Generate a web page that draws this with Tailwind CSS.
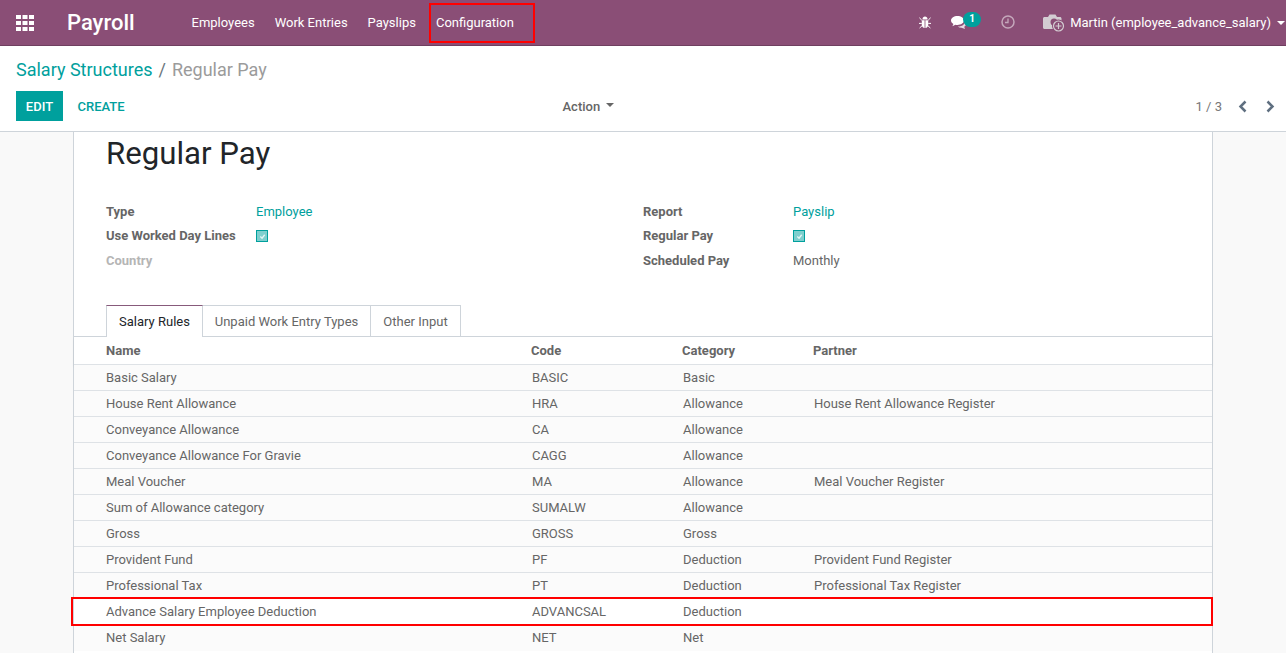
<!doctype html>
<html><head><meta charset="utf-8">
<script src="https://cdn.jsdelivr.net/npm/@tailwindcss/browser@4"></script>
</head>
<body class="m-0 h-[653px] w-[1286px] overflow-hidden bg-[#f9f9f9] font-['Roboto',sans-serif] text-[13px] text-[#666666]">
<header class="flex h-[46px] items-center border-b border-[#6f3f60] bg-[#8a4e76] text-white">
  <svg class="ml-[16px] h-[16px] w-[18px]" viewBox="0 0 18 16" fill="#fff"><rect x="0" y="0" width="5" height="4"/><rect x="6.500" y="0" width="5" height="4"/><rect x="13" y="0" width="5" height="4"/><rect x="0" y="6" width="5" height="4"/><rect x="6.500" y="6" width="5" height="4"/><rect x="13" y="6" width="5" height="4"/><rect x="0" y="12" width="5" height="4"/><rect x="6.500" y="12" width="5" height="4"/><rect x="13" y="12" width="5" height="4"/></svg>
  <div class="ml-[33px] w-[124.500px] text-[22px] font-medium leading-none">Payroll</div>
  <nav class="flex">
    <span class="mr-[20px]">Employees</span>
    <span class="mr-[20px]">Work Entries</span>
    <span class="mr-[20px]">Payslips</span>
    <span class="relative">Configuration<span class="absolute left-[-7px] top-[-10px] h-[40px] w-[106px] border-2 border-[#ff0000]"></span></span>
  </nav>
  <div class="ml-auto flex items-center">
    <svg class="mt-[-1px] h-[13px] w-[12px]" viewBox="0 0 12 13" fill="#fff"><path d="M3.400 3.400C3.600 1.600 4.600.6 6 .6s2.400 1 2.600 2.800z"/><path d="M2.800 4.200h2.800v7.800C4 11.800 2.800 10.400 2.800 8.400zM6.400 4.200h2.800v4.200c0 2-1.200 3.400-2.800 3.600z"/><path d="M.4 1.800l2.400 2.400M11.600 1.800L9.200 4.200M0 7.400h2.800M12 7.400H9.200M.6 12l2.600-2.400M11.400 12L8.800 9.600" stroke="#fff" stroke-width="1" fill="none"/></svg>
    <div class="relative ml-[20px] h-[16px] w-[32px]">
      <svg class="absolute left-0 top-[1px] h-[13px] w-[16px]" viewBox="0 0 16 13" fill="#fff"><path d="M6.500 0C3 0 0 2 0 4.500c0 1.400 1 2.700 2.400 3.500L1.400 10.300l3-1.600c.7.100 1.400.200 2.100.200 3.500 0 6.500-2 6.500-4.400S10 0 6.500 0z"/><path d="M14 5.500c0 2.800-3 5-6.500 5l-.8 0c1 .8 2.300 1.200 3.800 1.200l3.500 1.300-.8-2.200c1.200-.700 1.800-1.700 1.800-2.800 0-.9-.3-1.500-.8-2.100z" opacity=".8"/></svg>
      <span class="absolute left-[12px] top-[-3px] flex h-[15px] w-[18px] items-center justify-center rounded-full bg-[#00a09d] text-[10px] font-bold leading-none text-white">1</span>
    </div>
    <svg class="ml-[18px] mt-[-1px] h-[14px] w-[14px] opacity-50" viewBox="0 0 14 14" fill="none" stroke="#fff"><circle cx="7" cy="7" r="6" stroke-width="1.500"/><path d="M7 3.500V7.500H4" stroke-width="1.300"/></svg>
    <svg class="ml-[28px] h-[20px] w-[22px]" viewBox="0 0 22 20"><path d="M1.500 4H5L6.500 1.500h6L14 4h3c.8 0 1.500.7 1.500 1.500V16H1.500C.7 16 0 15.300 0 14.500v-9C0 4.700.7 4 1.500 4z" fill="#d3ccd2"/><circle cx="11" cy="9" r="3.500" fill="#8a4e76"/><circle cx="15.500" cy="13" r="6.500" fill="#8a4e76"/><circle cx="15.500" cy="13" r="5" fill="none" stroke="#d3ccd2" stroke-width="1.200"/><path d="M15.500 10v6M12.500 13h6" stroke="#d3ccd2" stroke-width="1.200"/></svg>
    <span class="ml-[5px]">Martin (employee_advance_salary)</span>
    <span class="ml-[6px] mr-[1px] h-0 w-0 border-x-[4px] border-t-[4px] border-x-transparent border-t-white"></span>
  </div>
</header>
<section class="h-[86px] border-b border-[#ced4da] bg-white px-[16px]">
  <div class="flex h-[45px] items-center pt-[1px] text-[18px]">
    <span class="text-[#00a09d]">Salary Structures</span><span class="mx-[6px] text-[#6c757d]">/</span><span class="text-[#9b9b9b]">Regular Pay</span>
  </div>
  <div class="relative flex h-[30px] items-center">
    <span class="flex h-[30px] w-[47px] items-center justify-center bg-[#00a09d] pt-px text-[13px] font-medium text-white">EDIT</span>
    <span class="ml-[14.500px] pt-px text-[13px] font-medium text-[#00a09d]">CREATE</span>
    <span class="absolute left-[546.500px] flex items-center pt-px font-medium text-[#666666]">Action<span class="ml-[6px] mb-[3px] h-0 w-0 border-x-[4px] border-t-[4px] border-x-transparent border-t-[#666666]"></span></span>
    <div class="ml-auto flex items-center">
      <span class="pt-px text-[#777777]">1 / 3</span>
      <svg class="ml-[16px] h-[13px] w-[9px]" viewBox="0 0 9 13" fill="none" stroke="#5f6f80" stroke-width="2.500"><path d="M7.500 1.500L2.500 6.500l5 5"/></svg>
      <svg class="ml-[19px] mr-[-5px] h-[13px] w-[9px]" viewBox="0 0 9 13" fill="none" stroke="#5f6f80" stroke-width="2.500"><path d="M1.500 1.500l5 5-5 5"/></svg>
    </div>
  </div>
</section>
<main class="mx-[73px] h-[521px] w-[1140px] border-x border-[#ced4da] bg-white">
  <h1 class="ml-[32px] pt-[3px] text-[31.200px] font-normal leading-[38px] text-[#212529]">Regular Pay</h1>
  <div class="ml-[32px] mt-[27px] grid h-[74px] grid-cols-[537px_1fr] font-medium">
    <div class="grid grid-cols-[150px_1fr] grid-rows-[24px_24px_25px] items-center">
      <span class="font-bold">Type</span><span class="font-normal text-[#00a09d]">Employee</span>
      <span class="font-bold">Use Worked Day Lines</span><span class="flex h-[12px] w-[12px] items-center justify-center border border-[#00a09d] bg-[#7fcfce]"><svg class="h-[7px] w-[7px] opacity-80" viewBox="0 0 8 8" fill="none" stroke="#fff" stroke-width="1.500"><path d="M1.500 4l2 2 3-4"/></svg></span>
      <span class="font-bold text-[#b5b5b5]">Country</span><span></span>
    </div>
    <div class="grid grid-cols-[150px_1fr] grid-rows-[24px_24px_25px] items-center">
      <span class="font-bold">Report</span><span class="font-normal text-[#00a09d]">Payslip</span>
      <span class="font-bold">Regular Pay</span><span class="flex h-[12px] w-[12px] items-center justify-center border border-[#00a09d] bg-[#7fcfce]"><svg class="h-[7px] w-[7px] opacity-80" viewBox="0 0 8 8" fill="none" stroke="#fff" stroke-width="1.500"><path d="M1.500 4l2 2 3-4"/></svg></span>
      <span class="font-bold">Scheduled Pay</span><span class="font-normal">Monthly</span>
    </div>
  </div>
  <div class="mt-[31px] flex h-[32px] border-b border-[#ced4da] pl-[32px]">
    <span class="z-10 flex h-[32px] w-[97px] items-center justify-center border-x border-t border-x-[#ced4da] border-t-[#875a7b] bg-white pt-px text-[#212529]">Salary Rules</span>
    <span class="flex h-[31px] w-[168px] items-center justify-center border-r border-t border-[#ced4da] pt-px">Unpaid Work Entry Types</span>
    <span class="flex h-[31px] w-[90px] items-center justify-center border-r border-t border-[#ced4da] pt-px">Other Input</span>
  </div>
  <table class="w-[1138px] table-fixed border-separate border-spacing-0">
    <colgroup><col class="w-[457px]"><col class="w-[151px]"><col class="w-[131px]"><col></colgroup>
    <thead>
      <tr class="h-[28px] font-bold shadow-[0_2px_3px_rgba(0,0,0,0.06)] [&>th]:border-b [&>th]:border-[#dee2e6] [&>th]:pt-[1px]">
        <th class="pl-[32px] text-left font-bold">Name</th><th class="text-left font-bold">Code</th><th class="text-left font-bold">Category</th><th class="text-left font-bold">Partner</th>
      </tr>
    </thead>
    <tbody class="bg-[#fbfbfb] [&_td]:h-[26px] [&_td]:border-b [&_td]:border-[#dee2e6] [&_td+td]:pl-px [&_td:first-child]:pl-[32px] [&_tr:last-child_td]:border-b-0">
      <tr><td>Basic Salary</td><td>BASIC</td><td>Basic</td><td></td></tr>
      <tr><td>House Rent Allowance</td><td>HRA</td><td>Allowance</td><td>House Rent Allowance Register</td></tr>
      <tr><td>Conveyance Allowance</td><td>CA</td><td>Allowance</td><td></td></tr>
      <tr><td>Conveyance Allowance For Gravie</td><td>CAGG</td><td>Allowance</td><td></td></tr>
      <tr><td>Meal Voucher</td><td>MA</td><td>Allowance</td><td>Meal Voucher Register</td></tr>
      <tr><td>Sum of Allowance category</td><td>SUMALW</td><td>Allowance</td><td></td></tr>
      <tr><td>Gross</td><td>GROSS</td><td>Gross</td><td></td></tr>
      <tr><td>Provident Fund</td><td>PF</td><td>Deduction</td><td>Provident Fund Register</td></tr>
      <tr><td>Professional Tax</td><td>PT</td><td>Deduction</td><td>Professional Tax Register</td></tr>
      <tr class="bg-white"><td class="relative">Advance Salary Employee Deduction<span class="absolute left-[-3px] top-[-2px] h-[29px] w-[1142px] border-2 border-[#ff0000]"></span></td><td>ADVANCSAL</td><td>Deduction</td><td></td></tr>
      <tr><td>Net Salary</td><td>NET</td><td>Net</td><td></td></tr>
    </tbody>
  </table>
</main>
</body></html>
